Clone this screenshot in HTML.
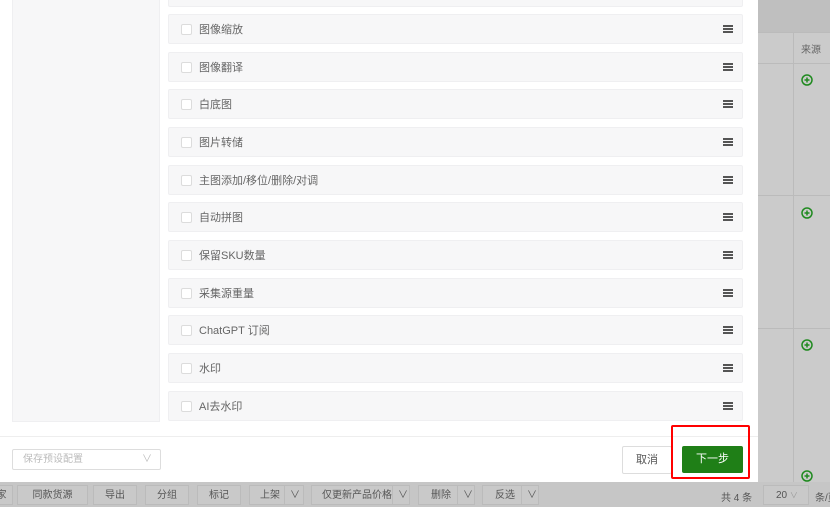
<!DOCTYPE html><html><head><meta charset="utf-8"><style>
*{box-sizing:border-box;margin:0;padding:0}
html,body{width:830px;height:507px;overflow:hidden}
body{background:#cbcbcb;font-family:"Liberation Sans","Noto Sans CJK SC",sans-serif;position:relative;font-size:11px;color:#555}
.abs{position:absolute;white-space:nowrap}
.item{position:absolute;left:168px;width:575px;height:30px;background:#f7f7f8;border:1px solid #efeff1;border-radius:2px}
.item .cb{position:absolute;left:12px;top:9px;width:11px;height:11px;border:1px solid #dcdcdc;background:#fff;border-radius:2px}
.item .t{position:absolute;left:30px;top:6px;font-size:11px;color:#666}
.item .h{position:absolute;left:554px;top:10px;width:10px;height:8px;border-top:2px solid #555;border-bottom:2px solid #555}
.item .h:after{content:"";position:absolute;left:0;right:0;top:1px;border-top:2px solid #555}
.btn{position:absolute;top:485px;height:20px;border:1px solid #bbb;background:#c9c9c9;color:#555;font-size:10px;line-height:19px;text-align:center;white-space:nowrap}
.plus{position:absolute;left:801px;width:12px;height:12px}
</style></head><body>
<div class="abs" style="left:758px;top:0;width:72px;height:32px;background:#bfbfbf"></div>
<div class="abs" style="left:758px;top:63px;width:72px;height:1px;background:#bbb"></div>
<div class="abs" style="left:758px;top:195px;width:72px;height:1px;background:#bbb"></div>
<div class="abs" style="left:758px;top:328px;width:72px;height:1px;background:#bbb"></div>
<div class="abs" style="left:793px;top:32px;width:1px;height:451px;background:#bbb"></div>
<div class="abs" style="left:758px;top:32px;width:72px;height:1px;background:#bbb"></div>
<div class="abs" style="left:801px;top:41px;font-size:10px;color:#666">来源</div>
<svg class="plus" style="top:74px" viewBox="0 0 12 12"><circle cx="6" cy="6" r="5" fill="none" stroke="#1f8a1f" stroke-width="1.5"/><path d="M6 3.5v5M3.5 6h5" stroke="#1f8a1f" stroke-width="1.5"/></svg>
<svg class="plus" style="top:207px" viewBox="0 0 12 12"><circle cx="6" cy="6" r="5" fill="none" stroke="#1f8a1f" stroke-width="1.5"/><path d="M6 3.5v5M3.5 6h5" stroke="#1f8a1f" stroke-width="1.5"/></svg>
<svg class="plus" style="top:339px" viewBox="0 0 12 12"><circle cx="6" cy="6" r="5" fill="none" stroke="#1f8a1f" stroke-width="1.5"/><path d="M6 3.5v5M3.5 6h5" stroke="#1f8a1f" stroke-width="1.5"/></svg>
<svg class="plus" style="top:470px" viewBox="0 0 12 12"><circle cx="6" cy="6" r="5" fill="none" stroke="#1f8a1f" stroke-width="1.5"/><path d="M6 3.5v5M3.5 6h5" stroke="#1f8a1f" stroke-width="1.5"/></svg>

<div class="abs" style="left:0;top:0;width:758px;height:482px;background:#fff"></div>
<div class="abs" style="left:12px;top:0;width:148px;height:422px;background:#f7f7f8;border:1px solid #efeff1;border-top:none"></div>
<div class="item" style="top:-23px"></div>
<div class="item" style="top:14px"><div class="cb"></div><div class="t">图像缩放</div><div class="h"></div></div>
<div class="item" style="top:52px"><div class="cb"></div><div class="t">图像翻译</div><div class="h"></div></div>
<div class="item" style="top:89px"><div class="cb"></div><div class="t">白底图</div><div class="h"></div></div>
<div class="item" style="top:127px"><div class="cb"></div><div class="t">图片转储</div><div class="h"></div></div>
<div class="item" style="top:165px"><div class="cb"></div><div class="t">主图添加/移位/删除/对调</div><div class="h"></div></div>
<div class="item" style="top:202px"><div class="cb"></div><div class="t">自动拼图</div><div class="h"></div></div>
<div class="item" style="top:240px"><div class="cb"></div><div class="t">保留SKU数量</div><div class="h"></div></div>
<div class="item" style="top:278px"><div class="cb"></div><div class="t">采集源重量</div><div class="h"></div></div>
<div class="item" style="top:315px"><div class="cb"></div><div class="t">ChatGPT 订阅</div><div class="h"></div></div>
<div class="item" style="top:353px"><div class="cb"></div><div class="t">水印</div><div class="h"></div></div>
<div class="item" style="top:391px"><div class="cb"></div><div class="t">AI去水印</div><div class="h"></div></div>
<div class="abs" style="left:0;top:436px;width:758px;height:1px;background:#eee"></div>
<div class="abs" style="left:12px;top:449px;width:149px;height:21px;border:1px solid #ddd;border-radius:2px;color:#bbb;font-size:10px;line-height:19px;padding-left:10px">保存预设配置<span style="position:absolute;right:8px;color:#bbb">∨</span></div>
<div class="abs" style="left:622px;top:446px;width:50px;height:28px;border:1px solid #ddd;border-radius:2px;text-align:center;line-height:26px;color:#555">取消</div>
<div class="abs" style="left:682px;top:446px;width:61px;height:27px;background:#1f7f17;border-radius:2px;text-align:center;line-height:27px;color:#fff">下一步</div>
<div class="abs" style="left:671px;top:425px;width:79px;height:54px;border:2px solid #f00;border-radius:2px"></div>

<div class="abs" style="left:0;top:482px;width:830px;height:25px;background:#c6c6c6"></div>
<div class="btn" style="left:-10px;width:23px">家</div>
<div class="btn" style="left:17px;width:71px">同款货源</div>
<div class="btn" style="left:93px;width:44px">导出</div>
<div class="btn" style="left:145px;width:44px">分组</div>
<div class="btn" style="left:197px;width:44px">标记</div>
<div class="btn" style="left:249px;width:55px;text-align:left;padding-left:10px">上架<span style="position:absolute;left:34px;top:0;border-left:1px solid #bbb;padding-left:5px">∨</span></div>
<div class="btn" style="left:311px;width:99px;text-align:left;padding-left:10px">仅更新产品价格<span style="position:absolute;left:80px;top:0;border-left:1px solid #bbb;padding-left:5px">∨</span></div>
<div class="btn" style="left:418px;width:57px;text-align:left;padding-left:12px">删除<span style="position:absolute;left:38px;top:0;border-left:1px solid #bbb;padding-left:5px">∨</span></div>
<div class="btn" style="left:482px;width:57px;text-align:left;padding-left:12px">反选<span style="position:absolute;left:38px;top:0;border-left:1px solid #bbb;padding-left:5px">∨</span></div>
<div class="abs" style="left:721px;top:489px;font-size:10px;color:#555">共 4 条</div>
<div class="btn" style="left:763px;width:46px;text-align:left;padding-left:12px">20 <span style="color:#999;font-size:8px">∨</span></div>
<div class="abs" style="left:815px;top:489px;font-size:10px;color:#555">条/页</div>
</body></html>
